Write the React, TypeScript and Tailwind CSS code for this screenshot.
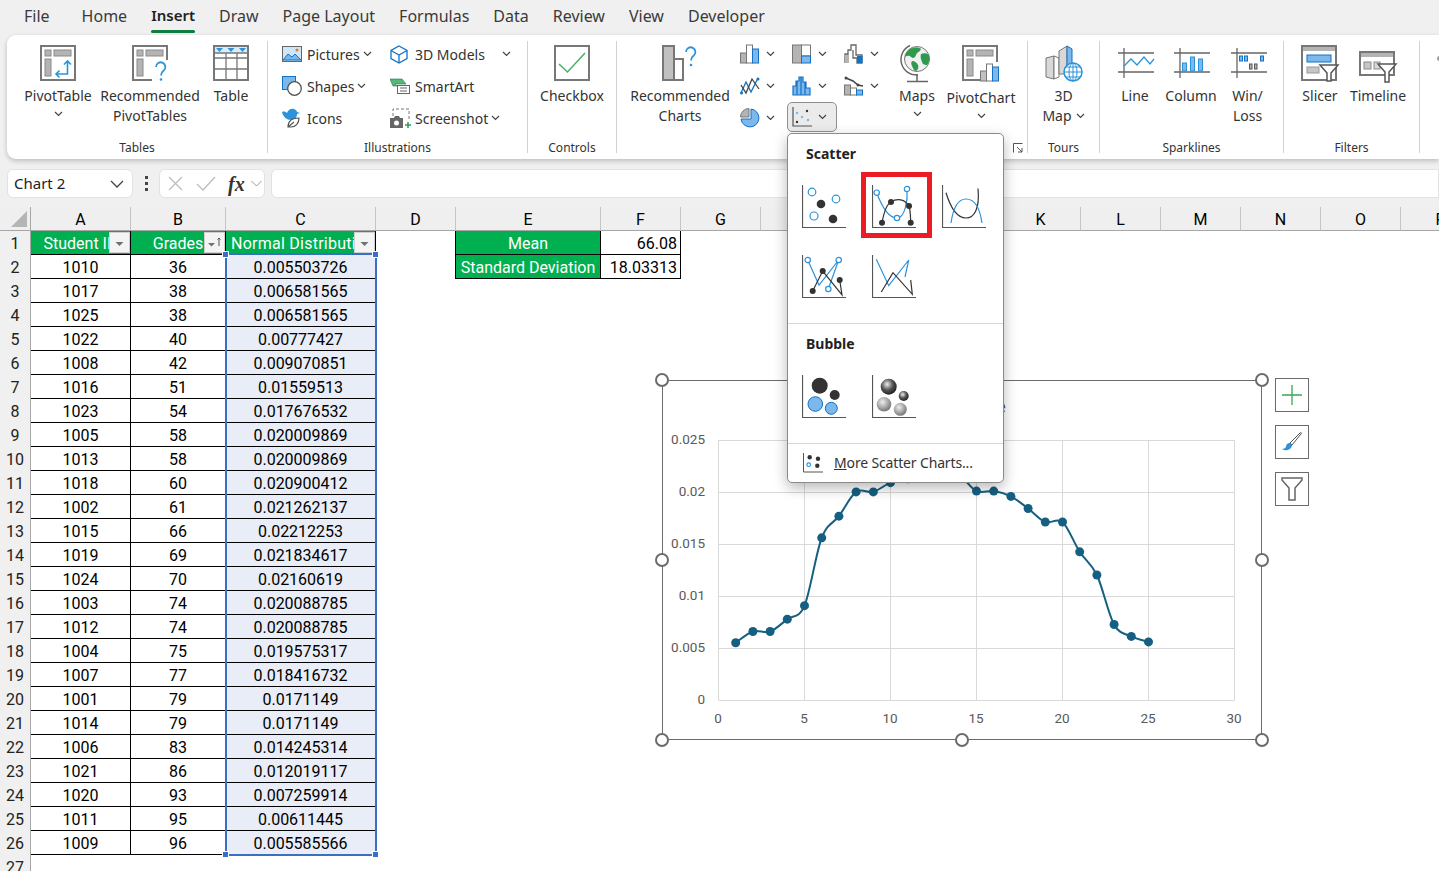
import type { ReactNode } from "react";

const ROWS: [number, number, string][] = [
  [1010, 36, "0.005503726"], [1017, 38, "0.006581565"], [1025, 38, "0.006581565"], [1022, 40, "0.00777427"],
  [1008, 42, "0.009070851"], [1016, 51, "0.01559513"], [1023, 54, "0.017676532"], [1005, 58, "0.020009869"],
  [1013, 58, "0.020009869"], [1018, 60, "0.020900412"], [1002, 61, "0.021262137"], [1015, 66, "0.02212253"],
  [1019, 69, "0.021834617"], [1024, 70, "0.02160619"], [1003, 74, "0.020088785"], [1012, 74, "0.020088785"],
  [1004, 75, "0.019575317"], [1007, 77, "0.018416732"], [1001, 79, "0.0171149"], [1014, 79, "0.0171149"],
  [1006, 83, "0.014245314"], [1021, 86, "0.012019117"], [1020, 93, "0.007259914"], [1011, 95, "0.00611445"],
  [1009, 96, "0.005585566"],
];

const COLS = ["D", "E", "F", "G", "H", "I", "J", "K", "L", "M", "N", "O", "P"];
const FRAME = "#777777";
const FILL = "#b4b4b4";
const BLUE = "#2b93dc";
const LIGHT = "#7cb8ec";
const DEEP = "#1272c4";

function Chevron({ className = "" }: { className?: string }) {
  return (
    <svg width="9" height="6" viewBox="0 0 9 6" fill="none" stroke="#444" strokeWidth="1.2" className={`shrink-0 ${className}`}>
      <path d="M1 1l3.500 3.500L8 1" />
    </svg>
  );
}

function Svg36({ children, w = 36, h = 36 }: { children: ReactNode; w?: number; h?: number }) {
  return (
    <svg width={w} height={h} viewBox={`0 0 ${w} ${h}`} fill="none" className="overflow-visible">
      {children}
    </svg>
  );
}

function PivotBase() {
  return (
    <>
      <rect x="1" y="1" width="34" height="34" fill="#fff" stroke={FRAME} strokeWidth="2" />
      <rect x="5" y="5" width="6" height="6" fill={FILL} stroke="#8a8a8a" />
      <rect x="14" y="5" width="17" height="6" fill={FILL} stroke="#8a8a8a" />
      <rect x="5" y="14" width="6" height="17" fill={FILL} stroke="#8a8a8a" />
    </>
  );
}

function PivotTableIcon() {
  return (
    <Svg36>
      <PivotBase />
      <path d="M27.500 16v13H16M24 19.500l3.500-3.500 3.500 3.500M19.500 25.500L16 29l3.500 3.500" stroke={BLUE} strokeWidth="1.600" />
    </Svg36>
  );
}

function RecommendedPivotIcon() {
  return (
    <Svg36>
      <PivotBase />
      <rect x="20" y="15" width="17" height="23" fill="#fff" />
      <path d="M24 22a4.700 4.700 0 1 1 7.500 3.800c-1.800 1.300-2.500 2.300-2.500 4.700" stroke={BLUE} strokeWidth="1.800" />
      <circle cx="29" cy="34.500" r="1.300" fill={BLUE} />
    </Svg36>
  );
}

function TableIcon() {
  return (
    <Svg36>
      <rect x="1" y="1" width="34" height="34" fill="#fff" stroke={FRAME} strokeWidth="2" />
      <rect x="2" y="2" width="32" height="6" fill="#d8ecfb" />
      <path d="M2 13h32M2 24h32M13 8v26M24 8v26M2 8h32" stroke={FRAME} strokeWidth="1.300" />
      <path d="M3 3h7l-3.500 4zM14.500 3h7L18 7zM26 3h7l-3.500 4z" fill={BLUE} />
    </Svg36>
  );
}

function CheckboxIcon() {
  return (
    <Svg36>
      <rect x="1" y="1" width="34" height="34" fill="#fff" stroke={FRAME} strokeWidth="2" />
      <path d="M5 19l8.500 8L31 8" stroke="#4caf68" strokeWidth="1.500" />
    </Svg36>
  );
}

function RecommendedChartsIcon() {
  return (
    <Svg36>
      <rect x="1" y="1" width="11" height="34" fill="#c0c0c0" stroke={FRAME} strokeWidth="2" />
      <rect x="12" y="14" width="9" height="21" fill="#fff" stroke={FRAME} strokeWidth="2" />
      <path d="M24 7a4.700 4.700 0 1 1 7.500 3.800c-1.800 1.300-2.500 2.300-2.500 4.700" stroke={BLUE} strokeWidth="1.800" />
      <circle cx="29" cy="20" r="1.300" fill={BLUE} />
    </Svg36>
  );
}

function MapsIcon() {
  return (
    <Svg36 w={32} h={38}>
      <path d="M9 0.500A15.500 15.500 0 0 0 17 30" stroke="#666" strokeWidth="1.500" />
      <path d="M16 29v7M6 36.500h21" stroke="#666" strokeWidth="1.500" />
      <circle cx="16" cy="14" r="12.500" fill="#f1f1f1" stroke="#777" strokeWidth="1" />
      <path d="M9 4c4-2 9-2 11 0-1 3-4 3-5 6s-3 4-5 2-4-1-6 0c0-3 2-6 5-8zM20 9c3-1 6-1 8 1 1 4 0 8-2 10-2 0-4 0-5-3s-2-5-1-8zM11 16c3 0 5 2 6 4s0 5-2 6c-2 0-3-3-4-5s-1-4 0-5z" fill="#2e9a4e" />
    </Svg36>
  );
}

function PivotChartIcon() {
  return (
    <Svg36 w={38} h={38}>
      <rect x="1" y="1" width="34" height="34" fill="#fff" stroke={FRAME} strokeWidth="2" />
      <rect x="5" y="5" width="6" height="6" fill={FILL} stroke="#8a8a8a" />
      <rect x="14" y="5" width="17" height="6" fill={FILL} stroke="#8a8a8a" />
      <rect x="5" y="14" width="6" height="17" fill={FILL} stroke="#8a8a8a" />
      <rect x="18" y="17" width="20" height="21" fill="#fff" />
      <rect x="18.500" y="26" width="6" height="10" fill="#c0c0c0" stroke={FRAME} />
      <rect x="24.500" y="19" width="6" height="17" fill="#fff" stroke={FRAME} />
      <rect x="30.500" y="22" width="6" height="14" fill={LIGHT} stroke={DEEP} />
    </Svg36>
  );
}

function Map3DIcon() {
  return (
    <Svg36 w={38} h={38}>
      <path d="M1 13l8-2v23l-8-2z" fill="#d8d8d8" stroke={FRAME} />
      <path d="M9 11l5 2v19l-5 2z" fill="#fff" stroke={FRAME} />
      <path d="M14 6l8-5v28h-8z" fill="#d8d8d8" stroke={FRAME} />
      <path d="M22 1l5 3v17h-5z" fill={LIGHT} stroke={DEEP} />
      <circle cx="28" cy="27" r="9" fill="#fff" stroke={BLUE} strokeWidth="1.500" />
      <path d="M19 27h18M28 18v18M21 22h14M21 32h14" stroke={BLUE} />
      <ellipse cx="28" cy="27" rx="4" ry="9" stroke={BLUE} />
    </Svg36>
  );
}

function SparkFrame({ children }: { children: ReactNode }) {
  return (
    <Svg36>
      <path d="M7 3v30M1 8h36M1 27h36" stroke="#666" strokeWidth="1.300" />
      {children}
    </Svg36>
  );
}

function SlicerIcon() {
  return (
    <Svg36 w={38} h={36}>
      <rect x="1" y="1" width="34" height="34" fill="#fff" stroke={FRAME} strokeWidth="2" />
      <rect x="2" y="2" width="32" height="4" fill={FILL} />
      <rect x="6" y="10" width="24" height="7" fill={LIGHT} stroke={DEEP} />
      <rect x="6" y="22" width="12" height="6" fill="#c6c6c6" stroke="#999" />
      <path d="M19 20h18l-7 8v8h-4v-8z" fill="#fff" stroke="#555" strokeWidth="1.500" />
    </Svg36>
  );
}

function TimelineIcon() {
  return (
    <Svg36 w={38} h={33}>
      <rect x="1" y="1" width="34" height="23" fill="#fff" stroke={FRAME} strokeWidth="2" />
      <rect x="2" y="2" width="32" height="4" fill={FILL} />
      <rect x="5" y="11" width="7" height="7" fill="#c6c6c6" stroke="#8a8a8a" />
      <rect x="15" y="11" width="6" height="7" fill="#d8d8d8" stroke="#8a8a8a" />
      <path d="M19 13h18l-7 8v10h-4V21z" fill="#fff" stroke="#555" strokeWidth="1.500" />
    </Svg36>
  );
}

function PicturesIcon() {
  return (
    <svg width="20" height="16" viewBox="0 0 20 16" fill="none">
      <rect x=".5" y=".5" width="19" height="15" fill="#cfe5f8" stroke="#666" />
      <path d="M1 14l5-6 4 3 3-3 6 6z" fill={LIGHT} stroke={DEEP} />
      <circle cx="15" cy="4" r="1.500" fill="#e97a22" />
    </svg>
  );
}

function ShapesIcon() {
  return (
    <svg width="20" height="20" viewBox="0 0 20 20" fill="none">
      <rect x=".5" y=".5" width="13" height="13" fill={LIGHT} stroke={DEEP} />
      <circle cx="12.500" cy="12.500" r="6.800" fill="#fff" stroke="#555" strokeWidth="1.300" />
    </svg>
  );
}

function IconsIcon() {
  return (
    <svg width="19" height="20" viewBox="0 0 19 20" fill="none">
      <path d="M0 4c2-1 4 0 5 1 1-3 4-5 7-4 2 1 3 2 3 3l3 1-3 1c0 4-3 6-6 6-4 0-8-3-9-8z" fill={BLUE} />
      <path d="M6 19c0-6 4-9 11-9 0 5-3 9-8 9zM6 19l6-5" fill="#fff" stroke="#555" strokeWidth="1.200" />
    </svg>
  );
}

function ModelsIcon() {
  return (
    <svg width="18" height="19" viewBox="0 0 18 19" fill="none" stroke={DEEP} strokeWidth="1.300">
      <path d="M9 1l8 4.500v8L9 18l-8-4.500v-8z" fill="#fff" />
      <path d="M1 5.500L9 10l8-4.500M9 10v8" />
    </svg>
  );
}

function SmartArtIcon() {
  return (
    <svg width="20" height="16" viewBox="0 0 20 16" fill="none">
      <path d="M0 1h12l4 5H5l2 2H3z" fill="#57b77a" stroke="#107c41" strokeWidth=".6" />
      <rect x="7.500" y="7.500" width="12" height="8" fill="#fff" stroke="#666" />
      <path d="M10 10h7M10 13h7" stroke="#666" />
    </svg>
  );
}

function ScreenshotIcon() {
  return (
    <svg width="22" height="21" viewBox="0 0 22 21" fill="none">
      <path d="M3 8V1h16v12" stroke="#777" strokeDasharray="3 2" />
      <path d="M0 10h4l1-2h4l1 2h3v10H0z" fill="#666" />
      <circle cx="6.500" cy="15" r="2.500" fill="#fff" />
      <path d="M18 14v6M15 17h6" stroke="#2e9a4e" strokeWidth="1.500" />
    </svg>
  );
}

function ChartGlyph({ kind }: { kind: string }) {
  return (
    <svg width="20" height="20" viewBox="0 0 20 20" fill="none">
      {kind === "column" && (
        <>
          <rect x=".5" y="9" width="6" height="10" fill={FILL} stroke={FRAME} />
          <rect x="6.500" y="1" width="6" height="18" fill="#fff" stroke={FRAME} />
          <rect x="12.500" y="5" width="6" height="14" fill={LIGHT} stroke={DEEP} />
        </>
      )}
      {kind === "line" && (
        <>
          <path d="M1 17L6 6l5 10L18 2" stroke={DEEP} strokeWidth="1.300" />
          <path d="M1 9l5 8 6-14 7 10" stroke="#444" strokeWidth="1.300" />
          <circle cx="1.500" cy="17" r="1.500" fill={DEEP} />
          <circle cx="18" cy="3" r="1.500" fill={DEEP} />
        </>
      )}
      {kind === "pie" && (
        <>
          <path d="M11 1a9 9 0 1 1-10 10h10z" fill={LIGHT} stroke={DEEP} />
          <path d="M9 .5V9H.5A8.500 8.500 0 0 1 9 .5z" fill={FILL} stroke={FRAME} />
        </>
      )}
      {kind === "tree" && (
        <>
          <rect x=".5" y="1" width="9" height="18" fill={FILL} stroke={FRAME} />
          <rect x="9.500" y="1" width="9" height="11" fill="#fff" stroke={FRAME} />
          <rect x="9.500" y="12" width="9" height="7" fill={LIGHT} stroke={DEEP} />
        </>
      )}
      {kind === "histogram" && (
        <path d="M1 19v-9h3V5h3V1h4v5h3v6h4v7z M5 5v14M9 1v18M13 6v13" fill={LIGHT} stroke={DEEP} strokeWidth="1.200" />
      )}
      {kind === "scatter" && (
        <>
          <path d="M1 0v19h19" stroke="#555" strokeWidth="1.200" />
          <circle cx="5" cy="6" r="1.200" fill={LIGHT} />
          <circle cx="10" cy="10" r="1.200" fill={LIGHT} />
          <circle cx="15" cy="4" r="1.200" fill="#333" />
          <circle cx="5" cy="15" r="1.200" fill="#333" />
          <circle cx="16" cy="13" r="1.200" fill={LIGHT} />
        </>
      )}
      {kind === "waterfall" && (
        <>
          <path d="M1 19v-9h3V6h3V1h5v10h6v8h-5v-5H9V6M4 10v9" stroke="#666" strokeWidth="1.300" />
          <rect x="13" y="12" width="5.500" height="7" fill={DEEP} />
          <rect x="1" y="11" width="4" height="8" fill={FILL} />
        </>
      )}
      {kind === "combo" && (
        <>
          <rect x=".5" y="9" width="6" height="10" fill={FILL} stroke={FRAME} />
          <rect x="6.500" y="12" width="6" height="7" fill="#fff" stroke={FRAME} />
          <rect x="12.500" y="14" width="6" height="5" fill={LIGHT} stroke={DEEP} />
          <path d="M2 2l7 3 5 4 5 1" stroke="#444" strokeWidth="1.500" />
          <circle cx="2" cy="2" r="1.500" fill="#444" />
          <circle cx="14" cy="9" r="1.500" fill="#444" />
        </>
      )}
    </svg>
  );
}

function Group({ width, label, children, launcher }: { width: number; label?: string; children: ReactNode; launcher?: boolean }) {
  return (
    <>
      <div className="flex h-full shrink-0 flex-col" style={{ width }}>
        <div className="min-h-0 flex-1">{children}</div>
        <div className="relative h-[15px] text-center text-[12px] leading-[15px] text-[#333]">
          {label}
          {launcher && (
            <svg width="10" height="10" viewBox="0 0 10 10" fill="none" stroke="#555" className="absolute top-[3px] right-[4px]">
              <path d="M.5 9.500V.5h9M4 4l5 5M9 5v4H5" />
            </svg>
          )}
        </div>
      </div>
      <div className="mt-[3px] mb-[2px] w-px shrink-0 bg-[#d2d2d2]" />
    </>
  );
}

function BigButton({ width, icon, lines, chevron, tall }: { width: number; icon: ReactNode; lines: string[]; chevron?: boolean; tall?: boolean }) {
  return (
    <div className="flex shrink-0 flex-col items-center pt-[7px]" style={{ width }}>
      <div className={`flex justify-center ${tall ? "h-[43px]" : "h-[41px]"}`}>{icon}</div>
      {lines.map((line) => (
        <div key={line} className="text-[14px] leading-[20px] whitespace-nowrap text-[#333]">
          {line}
        </div>
      ))}
      {chevron && (
        <div className="flex h-[16px] items-center">
          <Chevron />
        </div>
      )}
    </div>
  );
}

function SmallRow({ icon, label, chevron, gap = 3 }: { icon: ReactNode; label: string; chevron?: boolean; gap?: number }) {
  return (
    <div className="flex h-[32px] items-center">
      <div className="flex w-[25px] shrink-0 items-center">{icon}</div>
      <span className="text-[14px] whitespace-nowrap text-[#333]">{label}</span>
      {chevron && (
        <span style={{ marginLeft: gap }}>
          <Chevron />
        </span>
      )}
    </div>
  );
}

function ChartBtn({ kind, active }: { kind: string; active?: boolean }) {
  if (active) {
    return (
      <div className="-ml-[5px] flex h-[30px] w-[50px] items-center rounded-[5px] border border-[#8f8f8f] bg-[#ebebeb] pl-[4px]">
        <ChartGlyph kind={kind} />
        <Chevron className="ml-[6px]" />
      </div>
    );
  }
  return (
    <div className="flex h-[32px] items-center">
      <ChartGlyph kind={kind} />
      <Chevron className="ml-[6px]" />
    </div>
  );
}

function Ribbon() {
  return (
    <div className="relative z-10 ml-[7px] flex h-[124px] items-stretch rounded-l-[9px] bg-white pt-[3px] pb-[4px] shadow-[0_2px_5px_rgba(0,0,0,0.22)]">
      <Group width={260} label="Tables">
        <div className="flex pl-[13px]">
          <BigButton width={76} icon={<PivotTableIcon />} lines={["PivotTable"]} chevron />
          <BigButton width={108} icon={<RecommendedPivotIcon />} lines={["Recommended", "PivotTables"]} />
          <BigButton width={54} icon={<TableIcon />} lines={["Table"]} />
        </div>
      </Group>
      <Group width={259} label="Illustrations">
        <div className="flex pl-[14px]">
          <div className="w-[108px]">
            <SmallRow icon={<PicturesIcon />} label="Pictures" chevron />
            <SmallRow icon={<ShapesIcon />} label="Shapes" chevron />
            <SmallRow icon={<IconsIcon />} label="Icons" />
          </div>
          <div>
            <SmallRow icon={<ModelsIcon />} label="3D Models" chevron gap={17} />
            <SmallRow icon={<SmartArtIcon />} label="SmartArt" />
            <SmallRow icon={<ScreenshotIcon />} label="Screenshot" chevron />
          </div>
        </div>
      </Group>
      <Group width={88} label="Controls">
        <BigButton width={88} icon={<CheckboxIcon />} lines={["Checkbox"]} />
      </Group>
      <Group width={410} launcher>
        <div className="flex pl-[7px]">
          <BigButton width={112} icon={<RecommendedChartsIcon />} lines={["Recommended", "Charts"]} />
          <div className="ml-[4px] w-[52px]">
            <ChartBtn kind="column" />
            <ChartBtn kind="line" />
            <ChartBtn kind="pie" />
          </div>
          <div className="w-[52px]">
            <ChartBtn kind="tree" />
            <ChartBtn kind="histogram" />
            <ChartBtn kind="scatter" active />
          </div>
          <div className="w-[52px]">
            <ChartBtn kind="waterfall" />
            <ChartBtn kind="combo" />
          </div>
          <BigButton width={42} icon={<MapsIcon />} lines={["Maps"]} chevron />
          <BigButton width={86} icon={<PivotChartIcon />} lines={["PivotChart"]} chevron tall />
        </div>
      </Group>
      <Group width={71} label="Tours">
        <div className="flex flex-col items-center pt-[7px]">
          <div className="h-[41px]">
            <Map3DIcon />
          </div>
          <div className="text-[14px] leading-[20px] text-[#333]">3D</div>
          <div className="flex items-center gap-[4px] text-[14px] leading-[20px] text-[#333]">
            Map <Chevron />
          </div>
        </div>
      </Group>
      <Group width={183} label="Sparklines">
        <div className="flex pl-[7px]">
          <BigButton
            width={56}
            lines={["Line"]}
            icon={
              <SparkFrame>
                <path d="M7 21l7-7 6 6 7-8 6 7 4-5" stroke={BLUE} strokeWidth="1.300" />
              </SparkFrame>
            }
          />
          <BigButton
            width={56}
            lines={["Column"]}
            icon={
              <SparkFrame>
                <rect x="9.500" y="18" width="4" height="8" fill={LIGHT} stroke={BLUE} />
                <rect x="17.500" y="12" width="4" height="14" fill={LIGHT} stroke={BLUE} />
                <rect x="25.500" y="14" width="4" height="12" fill={LIGHT} stroke={BLUE} />
              </SparkFrame>
            }
          />
          <BigButton
            width={57}
            lines={["Win/", "Loss"]}
            icon={
              <SparkFrame>
                <rect x="9.500" y="11" width="3" height="5" fill={LIGHT} stroke={DEEP} />
                <rect x="14.500" y="11" width="3" height="5" fill={LIGHT} stroke={DEEP} />
                <rect x="19.500" y="19" width="2.500" height="5" fill={FILL} stroke="#555" />
                <rect x="24.500" y="19" width="2.500" height="5" fill={FILL} stroke="#555" />
                <rect x="30.500" y="11" width="3" height="5" fill={LIGHT} stroke={DEEP} />
              </SparkFrame>
            }
          />
        </div>
      </Group>
      <Group width={135} label="Filters">
        <div className="flex pl-[8px]">
          <BigButton width={56} icon={<SlicerIcon />} lines={["Slicer"]} />
          <BigButton
            width={60}
            lines={["Timeline"]}
            icon={
              <div className="pt-[6px]">
                <TimelineIcon />
              </div>
            }
          />
        </div>
      </Group>
      <div className="flex-1 pt-[18px] pl-[17px]">
        <div className="h-[5px] w-[3px] rounded-l-full bg-[#999]" />
      </div>
    </div>
  );
}

function FilterBtn({ sorted, className }: { sorted?: boolean; className: string }) {
  return (
    <div className={`absolute top-[1px] flex h-[21px] w-[21px] items-center justify-center border border-[#d0d0d0] bg-[#f4f4f4] ${className}`}>
      <svg width="17" height="15" viewBox="0 0 17 15" fill="none">
        <path d={sorted ? "M2 8h7L5.500 11.500z" : "M4.500 7h8L8.500 11z"} fill="#707070" />
        {sorted && <path d="M13 11V3M11.500 4.500L13 3l1.500 1.500" stroke="#555" />}
      </svg>
    </div>
  );
}

function Sheet() {
  const headerCell = "flex h-[24px] items-center justify-center border-r border-[#c4c4c4] border-b border-b-[#a6a6a6] bg-[#efefef] pt-[2px] text-[16px] text-black";
  const rowHead = "flex h-[24px] items-center justify-center border-r border-[#a6a6a6] bg-[#f0f0f0] pt-[2px] text-[16px] text-[#222]";
  const cell = "flex h-[24px] items-center justify-center border-r border-b border-black pt-[2px] text-[16px] text-black";
  const green = "relative flex h-[24px] items-center overflow-hidden border-r border-b border-black bg-[#00b050] pt-[2px] text-[16px] text-white";

  return (
    <div className="grid grid-cols-[31px_100px_95px_150px_80px_145px_80px_80px_80px_80px_80px_80px_80px_80px_80px_80px_80px] font-['Roboto',sans-serif]">
      <div className="flex h-[24px] items-end justify-end border-r border-b border-[#a6a6a6] bg-[#efefef] p-[3px]">
        <div className="h-0 w-0 border-b-[16px] border-l-[16px] border-b-[#b5b5b5] border-l-transparent" />
      </div>
      {["A", "B", "C"].concat(COLS).map((c) => (
        <div key={c} className={headerCell}>
          {c}
        </div>
      ))}

      <div className={rowHead}>1</div>
      <div className={`${green} justify-center`}>
        <span className="whitespace-nowrap">Student ID</span>
        <FilterBtn className="right-0" />
      </div>
      <div className={`${green} justify-center`}>
        <span>Grades</span>
        <FilterBtn sorted className="right-0" />
      </div>
      <div className={`${green} pl-[5px]`}>
        <span className="whitespace-nowrap tracking-[0.25px]">Normal Distribution</span>
        <FilterBtn className="right-0" />
      </div>
      <div className="h-[24px] border-r border-black" />
      <div className={`${green} justify-center`}>Mean</div>
      <div className={`${cell} justify-end pr-[3px]`}>66.08</div>
      {COLS.slice(3).map((c) => (
        <div key={c} />
      ))}

      <div className={rowHead}>2</div>
      <div className={cell}>{ROWS[0][0]}</div>
      <div className={cell}>{ROWS[0][1]}</div>
      <div className={`${cell} bg-[#e9edf7]`}>{ROWS[0][2]}</div>
      <div className="h-[24px] border-r border-black" />
      <div className={`${green} justify-center whitespace-nowrap`}>Standard Deviation</div>
      <div className={`${cell} justify-end pr-[3px]`}>18.03313</div>
      {COLS.slice(3).map((c) => (
        <div key={c} />
      ))}

      {ROWS.slice(1).map((row, i) => (
        <div key={row[0]} className="col-span-full grid grid-cols-subgrid">
          <div className={rowHead}>{i + 3}</div>
          <div className={cell}>{row[0]}</div>
          <div className={cell}>{row[1]}</div>
          <div className={`${cell} bg-[#e9edf7]`}>{row[2]}</div>
        </div>
      ))}
      <div className={rowHead}>27</div>
    </div>
  );
}

function smoothPath(points: [number, number][]) {
  let d = `M${points[0][0]} ${points[0][1]}`;
  for (let i = 0; i < points.length - 1; i++) {
    const p0 = points[Math.max(i - 1, 0)];
    const p1 = points[i];
    const p2 = points[i + 1];
    const p3 = points[Math.min(i + 2, points.length - 1)];
    const c1x = p1[0] + (p2[0] - p0[0]) / 6;
    const c1y = p1[1] + (p2[1] - p0[1]) / 6;
    const c2x = p2[0] - (p3[0] - p1[0]) / 6;
    const c2y = p2[1] - (p3[1] - p1[1]) / 6;
    d += ` C${c1x} ${c1y} ${c2x} ${c2y} ${p2[0]} ${p2[1]}`;
  }
  return d;
}

function Chart() {
  const xAt = (x: number) => 56.500 + (x * 516) / 30;
  const yAt = (y: number) => 320 - (y * 260) / 0.025;
  const points = ROWS.map((r, i) => [xAt(i + 1), yAt(parseFloat(r[2]))] as [number, number]);
  const yLabels = ["0", "0.005", "0.01", "0.015", "0.02", "0.025"];

  return (
    <div className="absolute top-[380px] left-[662px] z-20 h-[360px] w-[600px] border border-[#6b6b6b] bg-white">
      <svg width="600" height="360" viewBox="0 0 600 360" className="absolute -top-px -left-px font-['Roboto',sans-serif]">
        <text x="300" y="33" textAnchor="middle" fontSize="19" fill="#595959">
          Chart Title
        </text>
        {yLabels.map((_, i) => (
          <path key={i} d={`M56.500 ${320.500 - i * 52}H572.500`} stroke="#d9d9d9" />
        ))}
        {[0, 5, 10, 15, 20, 25, 30].map((x) => (
          <path key={x} d={`M${xAt(x)} 60V320`} stroke="#d9d9d9" />
        ))}
        {yLabels.map((l, i) => (
          <text key={l} x="43" y={324 - i * 52} textAnchor="end" fontSize="13.500" fill="#595959">
            {l}
          </text>
        ))}
        {[0, 5, 10, 15, 20, 25, 30].map((x) => (
          <text key={x} x={xAt(x) - 0.500} y="343" textAnchor="middle" fontSize="13.500" fill="#595959">
            {x}
          </text>
        ))}
        <path d={smoothPath(points)} fill="none" stroke="#156082" strokeWidth="2" />
        {points.map(([x, y]) => (
          <circle key={x} cx={x} cy={y} r="4.500" fill="#156082" />
        ))}
      </svg>
    </div>
  );
}

function Handle({ className }: { className: string }) {
  return <div className={`absolute z-20 h-[14px] w-[14px] rounded-full border-[2.5px] border-[#6b6b6b] bg-white ${className}`} />;
}

function SideButton({ children }: { children: ReactNode }) {
  return <div className="flex h-[34px] w-[34px] items-center justify-center border border-[#6b6b6b] bg-white">{children}</div>;
}

function SelectionHandle({ className }: { className: string }) {
  return <div className={`absolute z-[6] h-[7px] w-[7px] border border-white bg-[#3b6fc4] ${className}`} />;
}

function Axes({ w = 44 }: { w?: number }) {
  return <path d={`M.5 0V${w - 1.500}H${w}`} stroke="#555" strokeWidth="1.200" fill="none" />;
}

function Open({ x, y, r = 2.700 }: { x: number; y: number; r?: number }) {
  return <circle cx={x} cy={y} r={r} fill="#fff" stroke={BLUE} strokeWidth="1.200" />;
}

function Dot({ x, y, r = 3 }: { x: number; y: number; r?: number }) {
  return <circle cx={x} cy={y} r={r} fill="#333" />;
}

function MenuIcon({ children }: { children: ReactNode }) {
  return (
    <svg width="44" height="44" viewBox="0 0 44 44" fill="none">
      <Axes />
      {children}
    </svg>
  );
}

function ScatterMenu() {
  const blueCurve = "M4.700 7.700C10 22 16 33 25 33C33 33 36 15 35 4";
  const darkCurve = "M10 37.700C12 27 15 19 19 17C25 13 33 14 37 21C38.500 25 38.500 32 38.700 37.700";
  const heading = "pl-[18px] text-[14px] leading-[20px] font-bold text-[#222]";
  const cellBox = "relative flex items-center justify-center";

  return (
    <div className="absolute top-[133px] left-[787px] z-30 h-[350px] w-[217px] rounded-[5px] border border-[#8a8a8a] bg-white font-['Noto_Sans',sans-serif] shadow-[0_5px_14px_rgba(0,0,0,0.28)]">
      <div className="h-[38px] pt-[10px]">
        <div className={heading}>Scatter</div>
      </div>
      <div className="grid auto-rows-[70px] grid-cols-[70px_70px_70px] pl-[1px]">
        <div className={cellBox}>
          <MenuIcon>
            <Open x={10} y={7} r={3.800} />
            <Open x={34} y={14} r={3.800} />
            <Open x={12} y={31} r={4} />
            <Dot x={19} y={19} r={4.300} />
            <Dot x={31} y={34} r={4.300} />
          </MenuIcon>
        </div>
        <div className={cellBox}>
          <div className="absolute top-0 left-[2px] h-[66px] w-[71px] border-[5px] border-[#ed1c24]" />
          <MenuIcon>
            <path d={blueCurve} stroke={BLUE} strokeWidth="1.200" />
            <path d={darkCurve} stroke="#333" strokeWidth="1.200" />
            <Open x={4.700} y={7.700} />
            <Open x={25} y={33} />
            <Open x={35} y={4} />
            <Dot x={10} y={37.700} />
            <Dot x={19} y={17} />
            <Dot x={37} y={21} />
            <Dot x={38.700} y={37.700} />
          </MenuIcon>
        </div>
        <div className={cellBox}>
          <MenuIcon>
            <path d="M4 7.700C9 24 16 33 24 33C32 33 38 24 36 3.500" stroke="#333" strokeWidth="1.200" />
            <path d="M9 38C11 24 16 14 24 14C33 14 38 24 40 38" stroke={BLUE} strokeWidth="1.200" />
          </MenuIcon>
        </div>
        <div className={cellBox}>
          <MenuIcon>
            <path d="M5.700 5L17 30L36.700 5L26.300 34" stroke={BLUE} strokeWidth="1.200" />
            <path d="M10.700 36L20.700 16L40 40L37.700 25" stroke="#333" strokeWidth="1.200" />
            <Open x={5.700} y={5} />
            <Open x={26.300} y={34} />
            <Open x={36.700} y={5} />
            <Dot x={10.700} y={36} />
            <Dot x={20.700} y={16} />
            <Dot x={37.700} y={25} />
          </MenuIcon>
        </div>
        <div className={cellBox}>
          <MenuIcon>
            <path d="M4.300 4.300L16.700 30.700L36.700 5L33 22" stroke={BLUE} strokeWidth="1.200" />
            <path d="M9.300 37L21 17.700L40.300 39.300L38.700 25" stroke="#333" strokeWidth="1.200" />
          </MenuIcon>
        </div>
      </div>
      <div className="mt-[11px] h-px bg-[#d6d6d6]" />
      <div className="h-[51px] pt-[10px]">
        <div className={heading}>Bubble</div>
      </div>
      <div className="grid grid-cols-[70px_70px] pl-[1px]">
        <div className={cellBox}>
          <MenuIcon>
            <Dot x={17.700} y={10.700} r={8} />
            <Dot x={32.700} y={20} r={5} />
            <circle cx="13.300" cy="29" r="7.300" fill={LIGHT} stroke={DEEP} />
            <circle cx="29.300" cy="33.300" r="6" fill={LIGHT} stroke={DEEP} />
          </MenuIcon>
        </div>
        <div className={cellBox}>
          <MenuIcon>
            <defs>
              <radialGradient id="darkBall" cx="40%" cy="35%" r="65%">
                <stop offset="0%" stopColor="#eee" />
                <stop offset="55%" stopColor="#555" />
                <stop offset="100%" stopColor="#222" />
              </radialGradient>
              <radialGradient id="greyBall" cx="40%" cy="35%" r="65%">
                <stop offset="0%" stopColor="#eee" />
                <stop offset="100%" stopColor="#777" />
              </radialGradient>
            </defs>
            <circle cx="16.700" cy="11.700" r="8" fill="url(#darkBall)" />
            <circle cx="31.700" cy="21" r="5" fill="url(#darkBall)" />
            <circle cx="12" cy="29.300" r="7.300" fill="url(#greyBall)" />
            <circle cx="28.300" cy="34.300" r="6.500" fill="url(#greyBall)" />
          </MenuIcon>
        </div>
      </div>
      <div className="mt-[24px] h-px bg-[#d6d6d6]" />
      <div className="flex items-center pt-[8px] pl-[15px]">
        <svg width="20" height="20" viewBox="0 0 20 20" fill="none">
          <path d="M.5 0V19H20" stroke="#555" />
          <Dot x={6.700} y={4.300} r={2.200} />
          <Dot x={15} y={5.700} r={2.200} />
          <Open x={5.700} y={11.700} r={1.800} />
          <Dot x={14.300} y={12.700} r={2.200} />
        </svg>
        <span className="ml-[11px] text-[14px] tracking-[-0.15px] whitespace-nowrap text-[#333]">
          <span className="underline">M</span>ore Scatter Charts...
        </span>
      </div>
    </div>
  );
}

function FormulaBar() {
  return (
    <div className="flex h-[48px] items-start bg-[#f0f0f0] pt-[10px] pl-[7px]">
      <div className="flex h-[29px] w-[126px] items-center justify-between rounded-[6px] border border-[#e2e2e2] bg-white pr-[8px] pl-[6px] text-[15px] text-[#222]">
        Chart 2
        <svg width="14" height="8" viewBox="0 0 14 8" fill="none" stroke="#444" strokeWidth="1.300">
          <path d="M1 1l6 6 6-6" />
        </svg>
      </div>
      <div className="flex h-[29px] w-[26px] flex-col items-center justify-center gap-[3px]">
        <div className="h-[3px] w-[3px] bg-[#444]" />
        <div className="h-[3px] w-[3px] bg-[#444]" />
        <div className="h-[3px] w-[3px] bg-[#444]" />
      </div>
      <div className="flex h-[29px] w-[106px] items-center rounded-[6px] border border-[#e2e2e2] bg-white pl-[8px]">
        <svg width="15" height="15" viewBox="0 0 15 15" stroke="#bdbdbd" strokeWidth="1.300" fill="none">
          <path d="M1 1l13 13M14 1L1 14" />
        </svg>
        <svg width="20" height="15" viewBox="0 0 20 15" stroke="#bdbdbd" strokeWidth="1.300" fill="none" className="ml-[13px]">
          <path d="M1 8l6 6L19 1" />
        </svg>
        <span className="ml-[12px] font-['Liberation_Serif',serif] text-[20px] leading-none font-bold text-[#333] italic">fx</span>
        <svg width="11" height="7" viewBox="0 0 11 7" fill="none" stroke="#999" className="ml-[6px]">
          <path d="M.5 1l5 5 5-5" />
        </svg>
      </div>
      <div className="ml-[6px] h-[29px] flex-1 rounded-l-[6px] border border-[#e2e2e2] bg-white" />
    </div>
  );
}

const TABS = ["Home", "Insert", "Draw", "Page Layout", "Formulas", "Data", "Review", "View", "Developer"];

export default function App() {
  return (
    <div className="relative h-[871px] w-[1439px] overflow-hidden bg-white font-['Noto_Sans',sans-serif]">
      <div className="flex h-[35px] items-center gap-[24px] bg-[#f0f0f0] pb-[4px] pl-[24px] text-[16px] text-[#3a3a3a]">
        <span className="mr-[8px]">File</span>
        {TABS.map((t) =>
          t === "Insert" ? (
            <span key={t} className="relative text-[15px] font-semibold text-[#222]">
              {t}
              <span className="absolute right-0 -bottom-[6px] left-0 h-[3px] rounded-full bg-[#107c41]" />
            </span>
          ) : (
            <span key={t}>{t}</span>
          ),
        )}
      </div>
      <div className="bg-[#f0f0f0]">
        <Ribbon />
      </div>
      <FormulaBar />
      <Sheet />

      {/* selection round C2:C26 */}
      <div className="absolute top-[253px] left-[225px] z-[5] h-[603px] w-[152px] border-2 border-[#3b6fc4]" />
      <SelectionHandle className="top-[251px] left-[222px]" />
      <SelectionHandle className="top-[251px] left-[372px]" />
      <SelectionHandle className="top-[851px] left-[222px]" />
      <SelectionHandle className="top-[851px] left-[372px]" />

      <Chart />
      <Handle className="top-[373px] left-[655px]" />
      <Handle className="top-[373px] left-[1255px]" />
      <Handle className="top-[553px] left-[655px]" />
      <Handle className="top-[553px] left-[1255px]" />
      <Handle className="top-[733px] left-[655px]" />
      <Handle className="top-[733px] left-[955px]" />
      <Handle className="top-[733px] left-[1255px]" />

      <div className="absolute top-[378px] left-[1275px] z-20 flex flex-col gap-[13px]">
        <SideButton>
          <svg width="20" height="20" viewBox="0 0 20 20" stroke="#3ba55d" strokeWidth="1.300">
            <path d="M10 0v20M0 10h20" />
          </svg>
        </SideButton>
        <SideButton>
          <svg width="22" height="22" viewBox="0 0 22 22" fill="none">
            <path d="M9 12L19 2c1-1 2 0 1 1L11 14z" fill="#fff" stroke="#555" />
            <path d="M9 12c-3 0-4 2-4 4-1 1-2 2-4 2 3 2 8 2 10-3 0-1 0-2-2-3z" fill={BLUE} />
          </svg>
        </SideButton>
        <SideButton>
          <svg width="22" height="24" viewBox="0 0 22 24" fill="none" stroke="#666" strokeWidth="1.500">
            <path d="M1 1h20v2l-7 8v12H8V11L1 3z" />
          </svg>
        </SideButton>
      </div>

      <ScatterMenu />
    </div>
  );
}
